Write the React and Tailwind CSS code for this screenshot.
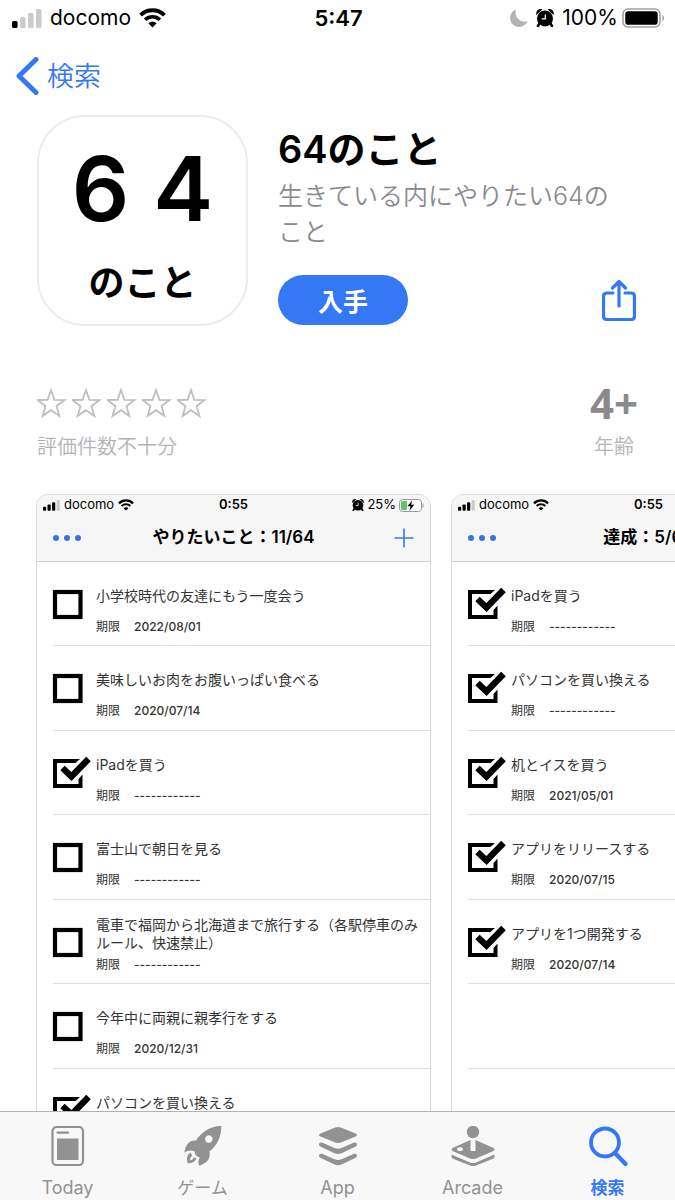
import React from "react";

const WISHES = [
  { title: ["小学校時代の友達にもう一度会う"], due: "2022/08/01", done: false },
  { title: ["美味しいお肉をお腹いっぱい食べる"], due: "2020/07/14", done: false },
  { title: ["iPadを買う"], due: "------------", done: true },
  { title: ["富士山で朝日を見る"], due: "------------", done: false },
  { title: ["電車で福岡から北海道まで旅行する（各駅停車のみ", "ルール、快速禁止）"], due: "------------", done: false },
  { title: ["今年中に両親に親孝行をする"], due: "2020/12/31", done: false },
  { title: ["パソコンを買い換える"], due: "------------", done: true },
];

const ACHIEVED = [
  { title: ["iPadを買う"], due: "------------", done: true },
  { title: ["パソコンを買い換える"], due: "------------", done: true },
  { title: ["机とイスを買う"], due: "2021/05/01", done: true },
  { title: ["アプリをリリースする"], due: "2020/07/15", done: true },
  { title: ["アプリを1つ開発する"], due: "2020/07/14", done: true },
  null,
  null,
];

function Signal({ className, on }) {
  const bars = [
    { x: 0, y: 13, h: 7 },
    { x: 8, y: 9, h: 11 },
    { x: 16, y: 5, h: 15 },
    { x: 24, y: 1, h: 19 },
  ];
  return (
    <svg viewBox="0 0 30 20" className={className} aria-hidden="true">
      {bars.map((b, i) => (
        <rect key={b.x} x={b.x} y={b.y} width="5.6" height={b.h} rx="1.6" fill={i < on ? "#000" : "#cbcbcb"} />
      ))}
    </svg>
  );
}

function Wifi({ className }) {
  return (
    <svg viewBox="0 0 27 20" className={className} fill="none" stroke="#000" aria-hidden="true">
      <path d="M1.6 7.2C8.3 .6 18.7 .6 25.4 7.2" strokeWidth="3.8" />
      <path d="M6.1 11.8c4.2-4 10.6-4 14.8 0" strokeWidth="3.6" />
      <path d="M13.5 19.4 9.4 15.3c2.3-2 5.9-2 8.2 0z" fill="#000" stroke="none" />
    </svg>
  );
}

function Alarm({ className }) {
  return (
    <svg viewBox="0 0 18 18" className={className} aria-hidden="true">
      <circle cx="9" cy="9.4" r="8" />
      <path d="M.4 6C-.6 2.200 2.200-.6 6.400 .2zM17.600 6C18.600 2.200 15.800-.6 11.600 .2z" />
      <path d="M3.600 14.300 2 17M14.400 14.300l1.600 2.700" stroke="#000" strokeWidth="2.6" strokeLinecap="round" />
      <path d="M9.300 5.500v4.300H5.600" fill="none" stroke="#fff" strokeWidth="1.2" />
    </svg>
  );
}

function CheckMark({ done }) {
  return (
    <svg viewBox="0 0 40 34" className="pointer-events-none col-start-1 row-start-1 h-[34px] w-10" aria-hidden="true">
      {done ? (
        <>
          <path d="M1 3h27l-4.500 4H5v21h21.500v-5l4-4.500V32H1z" />
          <path d="M10.500 12 19.500 20.500 36.500 3" fill="none" stroke="#000" strokeWidth="6.4" />
        </>
      ) : (
        <rect x="3" y="5" width="25.5" height="25" fill="#fff" stroke="#000" strokeWidth="4.2" />
      )}
    </svg>
  );
}

function Row({ item }) {
  if (!item) return <li className="ml-4 border-b border-[#dfdfdf]" />;
  return (
    <li className="ml-4 border-b border-[#dfdfdf]">
      <label className="flex">
        <span className="mt-[25px] -ml-px grid shrink-0">
          <input type="checkbox" defaultChecked={item.done} className="col-start-1 row-start-1 size-8 appearance-none" />
          <CheckMark done={item.done} />
        </span>
        <span className="ml-1 flex flex-col pt-4 text-[#333]">
          <span className="flex h-9 flex-col justify-center text-sm leading-[18px] whitespace-nowrap">
            {item.title.map((line) => (
              <span key={line}>{line}</span>
            ))}
          </span>
          <span className="flex gap-3.5 text-xs leading-[26px] font-medium">
            <span className="font-normal">期限</span>
            <span>{item.due}</span>
          </span>
        </span>
      </label>
    </li>
  );
}

function Shot({ title, items }) {
  return (
    <article className="w-[395px] shrink-0 overflow-hidden rounded-t-xl border border-[#d8d8da] bg-white">
      <header className="border-b border-[#d0d0d2] bg-[#f6f6f6]">
        <div className="grid h-5 grid-cols-3 items-center px-1.5 text-[13px]">
          <div className="flex items-center gap-1">
            <Signal className="h-3 w-[17px]" on={3} />
            <span>docomo</span>
            <Wifi className="h-3 w-4" />
          </div>
          <span className="text-center font-semibold">0:55</span>
          <div className="flex items-center justify-end gap-[3px]">
            <Alarm className="size-3" />
            <span>25%</span>
            <svg viewBox="0 0 25 13" className="h-[13px] w-[25px]" aria-hidden="true">
              <rect x=".5" y=".5" width="22" height="12" rx="3" fill="#fff" stroke="#999" />
              <rect x="2" y="2" width="6" height="9" rx="1" fill="#62c466" />
              <path d="M13 1.500 8.500 7.300h3l-1 4.500 4.800-6h-3z" />
              <path d="M24 4.500v4" stroke="#999" />
            </svg>
          </div>
        </div>
        <div className="grid h-[46px] grid-cols-[1fr_auto_1fr] items-center px-4">
          <button aria-label="メニュー" className="flex gap-[5px]">
            <span className="size-1.5 rounded-full bg-[#3f72dd]" />
            <span className="size-1.5 rounded-full bg-[#3f72dd]" />
            <span className="size-1.5 rounded-full bg-[#3f72dd]" />
          </button>
          <h2 className="text-[17px] font-semibold">{title}</h2>
          <button aria-label="追加" className="justify-self-end">
            <svg viewBox="0 0 20 20" className="size-5" stroke="#3478f6" strokeWidth="1.6" aria-hidden="true">
              <path d="M10 .5v19M.5 10h19" />
            </svg>
          </button>
        </div>
      </header>
      <ul className="grid h-[591px] auto-rows-fr">
        {items.map((item, i) => (
          <Row key={i} item={item} />
        ))}
      </ul>
    </article>
  );
}

const TABS = [
  {
    label: "Today",
    size: "text-lg",
    icon: (
      <svg viewBox="0 0 40 40" className="size-10" aria-hidden="true">
        <rect x="4.5" y="1" width="30.5" height="38" rx="4" fill="none" stroke="#929292" strokeWidth="2.2" />
        <path d="M9.500 6.700h10.500" stroke="#929292" strokeWidth="2.2" strokeLinecap="round" />
        <path d="M9 12.500h21.500v21.500h-21.500z" fill="#929292" />
      </svg>
    ),
  },
  {
    label: "ゲーム",
    size: "text-[17px]",
    icon: (
      <svg viewBox="547 137 120 124" className="size-10" fill="#929292" aria-hidden="true">
        <path
          fillRule="evenodd"
          d="M664 136C630 138 604 154 585 182C567 179 553 193 549 220C560 212 570 211 581 215L582 222C585 229 590 233 597 234C592 244 591 252 596 260C620 252 631 239 627 216C653 196 664 168 664 136ZM625 166a11.500 11.500 0 1 0 .1 0z"
        />
        <path d="M568 219C556 226 556 242 560 253C572 253 583 248 587 238L578 234C577 241 572 243 567 243C567 237 569 231 574 229Z" />
      </svg>
    ),
  },
  {
    label: "App",
    size: "text-lg",
    icon: (
      <svg viewBox="0 0 40 40" className="size-10" fill="#929292" aria-hidden="true">
        <path d="M16.500 1.700q3.500-1.400 7 0L37.500 7.500q3 1.500 0 3L23.500 16.300q-3.500 1.400-7 0L2.500 10.500q-3-1.500 0-3z" />
        <path d="M4 16.600 16.500 22q3.500 1.400 7 0L36 16.600c2.800-.8 4.200 2.400 1.700 3.900L23.500 27.200q-3.500 1.500-7 0L2.300 20.500C-.2 19 1.200 15.800 4 16.600z" />
        <path d="M4 27.800 16.500 33.200q3.500 1.400 7 0L36 27.800c2.800-.8 4.200 2.400 1.700 3.900L23.500 38.400q-3.500 1.500-7 0L2.300 31.700C-.2 30.200 1.200 27 4 27.800z" />
      </svg>
    ),
  },
  {
    label: "Arcade",
    size: "text-lg",
    icon: (
      <svg viewBox="0 0 44 40" className="h-10 w-11" fill="#929292" aria-hidden="true">
        <circle cx="22" cy="6" r="6.2" />
        <path
          fillRule="evenodd"
          d="M19.500 14 2 21.800q-3 1.700 0 3.400L19 32.500q3 1.200 6 0L42 25.200q3-1.700 0-3.400L24.500 14V25h-5zM9 21.300c4 0 4 3.700 0 3.700s-4-3.700 0-3.700z"
        />
        <path d="M.5 28.500 19 36.500q3 1.200 6 0l18.500-8v2.200q0 1.300-1.500 2L25 39.600q-3 1.200-6 0L2 32.700q-1.500-.7-1.500-2z" />
      </svg>
    ),
  },
  {
    label: "検索",
    size: "text-[17px]",
    active: true,
    icon: (
      <svg viewBox="0 0 40 40" className="size-10" fill="none" stroke="#3478f6" aria-hidden="true">
        <circle cx="17" cy="16.5" r="14" strokeWidth="3.8" />
        <path d="m27 27 10.500 11" strokeWidth="4.2" strokeLinecap="round" />
      </svg>
    ),
  },
];

export default function App() {
  return (
    <div className="flex h-screen flex-col overflow-hidden bg-white font-['Inter','Noto_Sans_CJK_JP',sans-serif] text-black">
      <div className="grid h-9 shrink-0 grid-cols-3 items-center pr-2.5 pl-3 text-[21px]">
        <div className="flex items-center gap-2">
          <Signal className="h-5 w-[30px]" on={1} />
          <span>docomo</span>
          <Wifi className="h-5 w-[27px]" />
        </div>
        <span className="text-center text-[22px] font-semibold">5:47</span>
        <div className="flex items-center justify-end gap-2">
          <svg viewBox="0 0 18 18" className="size-[18px]" fill="#b3b3b3" aria-hidden="true">
            <path d="M6 .5A9 9 0 1 0 17.500 12.300 9.300 9.300 0 0 1 6 .5z" />
          </svg>
          <Alarm className="size-[18px]" />
          <span>100%</span>
          <svg viewBox="0 0 43 20" className="-ml-1 h-5 w-[43px]" aria-hidden="true">
            <rect x="1" y="1" width="37" height="18" rx="5" fill="none" stroke="#a0a0a0" strokeWidth="1.6" />
            <rect x="3.3" y="3.3" width="32.4" height="13.4" rx="2.8" />
            <path d="M40.300 7v6c2.300-1 2.300-5 0-6z" fill="#a0a0a0" />
          </svg>
        </div>
      </div>

      <nav className="flex h-[79px] shrink-0 items-center px-4">
        <a href="#search" className="flex items-center gap-2 font-['Noto_Sans_CJK_JP',sans-serif] text-[27px] font-[350] text-[#3478f6]">
          <svg viewBox="0 0 23 38" className="h-[38px] w-[23px]" fill="none" stroke="#3478f6" strokeWidth="5" strokeLinecap="round" strokeLinejoin="round" aria-hidden="true">
            <path d="M20 2.500 3 19l17 16.500" />
          </svg>
          検索
        </a>
      </nav>

      <main className="flex-1 overflow-hidden">
        <section className="flex gap-[30px] px-[37px]">
          <div className="flex size-[211px] shrink-0 flex-col items-center rounded-[48px] border-2 border-[#ececec] pt-6">
            <div className="flex gap-6 text-[90px] leading-[96px] font-semibold">
              <span>6</span>
              <span>4</span>
            </div>
            <div className="mt-5 text-4xl leading-[52px] font-bold">のこと</div>
          </div>
          <div className="flex min-w-0 flex-1 flex-col">
            <h1 className="mt-2 text-[38px] leading-[52px] font-semibold">64のこと</h1>
            <p className="mt-[3px] pr-4 text-[25px] leading-9 font-[350] text-[#8a8a8e]">生きている内にやりたい64のこと</p>
            <div className="mt-[25px] flex items-center justify-between">
              <button className="h-[50px] w-[130px] rounded-full bg-[#3478f6] font-['Noto_Sans_CJK_JP',sans-serif] text-[25px] leading-9 font-bold text-white">入手</button>
              <button aria-label="共有">
                <svg viewBox="0 0 36 42" className="h-[42px] w-9" fill="none" stroke="#3478f6" strokeWidth="3.2" strokeLinecap="round" strokeLinejoin="round" aria-hidden="true">
                  <path d="M11 14H5q-3.500 0-3.500 3.500v19.500q0 3.500 3.500 3.500h24q3.500 0 3.500-3.500V17.500q0-3.500-3.500-3.500H23" />
                  <path d="M17 27V2.500M10.500 9l6.500-6.500L23.500 9" />
                </svg>
              </button>
            </div>
          </div>
        </section>

        <section className="mt-[57px] flex justify-between px-[37px] text-xl leading-7 font-[350] text-[#b4b4b8]">
          <div>
            <div className="flex h-10 items-center gap-[5px]" role="img" aria-label="評価なし">
              {[1, 2, 3, 4, 5].map((n) => (
                <svg key={n} viewBox="0 0 30 30" className="size-[30px]" fill="none" stroke="#bfbfc3" strokeWidth="1.8" aria-hidden="true">
                  <path d="m14 2 3.400 9.800 10.200.2-8.100 6.200 2.900 9.800-8.400-5.800L5.600 28l2.900-9.800L.4 12l10.200-.2z" />
                </svg>
              ))}
            </div>
            <div className="mt-2.5">評価件数不十分</div>
          </div>
          <div className="text-center">
            <div className="font-['Noto_Sans',sans-serif] text-[42px] leading-10 font-bold text-[#8a8a8e]">4+</div>
            <div className="mt-2.5">年齢</div>
          </div>
        </section>

        <section className="mt-[33px] flex gap-5 pl-9">
          <Shot title="やりたいこと：11/64" items={WISHES} />
          <Shot title="達成：5/64" items={ACHIEVED} />
        </section>
      </main>

      <nav className="grid h-[89px] shrink-0 grid-cols-5 border-t border-[#b2b2b2] bg-[#f8f8f9]">
        {TABS.map((tab) => (
          <a
            key={tab.label}
            href={"#" + tab.label}
            className={
              tab.active
                ? "flex flex-col items-center gap-2.5 pt-3.5 font-bold text-[#3478f6]"
                : "flex flex-col items-center gap-2.5 pt-3.5 text-[#929292]"
            }
          >
            {tab.icon}
            <span className={tab.size}>
              <span className="block leading-6">{tab.label}</span>
            </span>
          </a>
        ))}
      </nav>
    </div>
  );
}
